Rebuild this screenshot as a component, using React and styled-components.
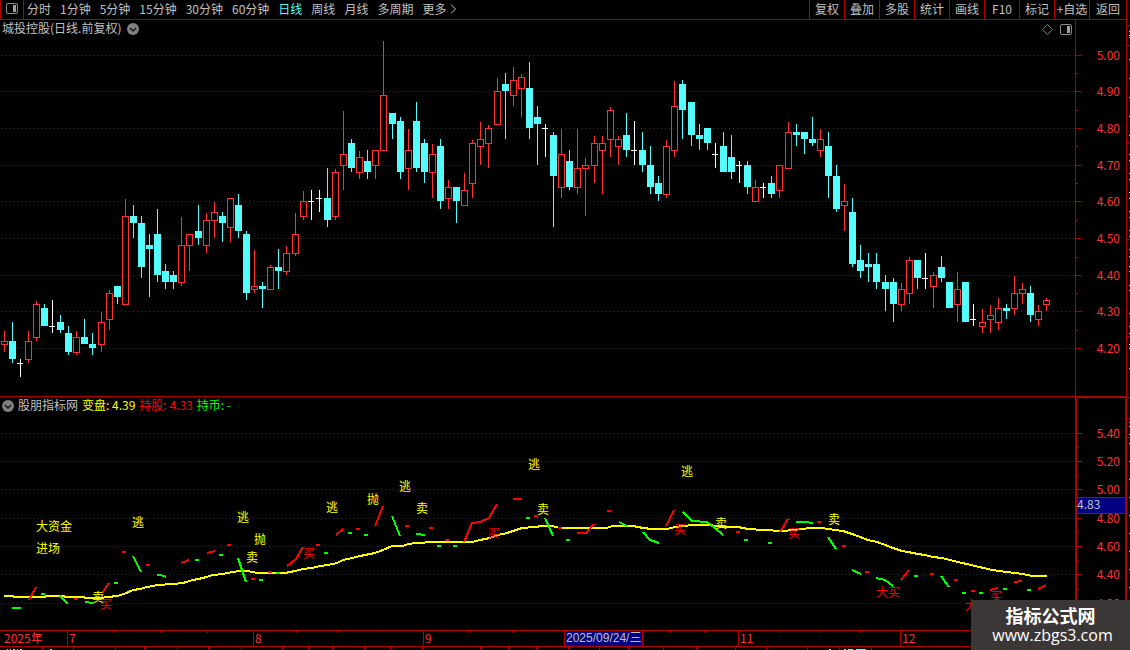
import React from 'react';
import styled, { createGlobalStyle, css } from 'styled-components';

const RED = '#b00000';
const UP = '#ff3232';
const DOWN = '#54fcfc';
const TEXT = '#c0c0c0';
const FONT = "'Noto Sans CJK SC', 'Noto Sans', sans-serif";

const GlobalStyle = createGlobalStyle`
  * {
    box-sizing: border-box;
  }
  body {
    margin: 0;
    background: #000;
    color: ${TEXT};
    font-family: ${FONT};
    font-size: 12px;
    overflow: hidden;
  }
`;

const Page = styled.div`
  display: flex;
  min-height: 100vh;
  background: #000;
`;

const Main = styled.main`
  flex: 1;
  min-width: 0;
  display: flex;
  flex-direction: column;
`;

const SideStrip = styled.aside`
  width: 4px;
  border-left: 1px solid ${RED};
`;

const Toolbar = styled.header`
  display: flex;
  height: 20px;
  border-bottom: 1px solid ${RED};
`;

const buttonReset = css`
  padding: 0;
  border: 0;
  background: none;
  color: inherit;
  font-family: inherit;
  font-size: 12px;
  line-height: 17px;
  white-space: nowrap;
  cursor: pointer;
`;

const LayoutButton = styled.button`
  ${buttonReset}
  display: flex;
  align-items: center;
  justify-content: center;
  width: 24px;
  padding-bottom: 2px;
  border-left: 1px solid ${RED};
  border-right: 1px solid ${RED};
`;

const Periods = styled.nav`
  display: flex;
  gap: 9px;
  padding-left: 3px;
`;

const PeriodButton = styled.button`
  ${buttonReset}
  display: flex;
  align-items: center;
  padding-bottom: 2px;
  color: ${(props) => (props.$active ? DOWN : TEXT)};
`;

const Tools = styled.nav`
  display: flex;
  margin-left: auto;
`;

const ToolButton = styled.button`
  ${buttonReset}
  width: 35px;
  padding-bottom: 2px;
  border-left: 1px solid ${RED};

  &:last-child {
    width: 37px;
  }
`;

const Panel = styled.section`
  display: flex;
`;

const Plot = styled.div`
  flex: 1;
  min-width: 0;
  border-top: ${(props) => (props.$ruled ? `1px solid ${RED}` : '0')};
`;

const Axis = styled.div`
  width: 51px;
  border-left: 1px solid ${RED};
  ${(props) =>
    props.$selected &&
    css`
      border: 0 solid ${RED};
      border-width: 2px 1px 0 2px;
    `}
`;

const Caption = styled.div`
  display: flex;
  align-items: center;
  height: 18px;
  padding-left: 2px;
  gap: ${(props) => props.$gap}px;
  line-height: 16px;
  white-space: nowrap;
`;

const Title = styled.span`
  padding-bottom: 2px;
  color: ${(props) => props.$color || TEXT};
`;

const CaptionTools = styled.div`
  display: flex;
  align-items: center;
  gap: 7px;
  margin-left: auto;
  padding-right: 3px;
`;

const IconButton = styled.button`
  ${buttonReset}
  display: flex;
`;

const Drawing = styled.svg`
  display: block;
  width: 100%;
  height: ${(props) => props.$height}px;
  overflow: visible;
  font-family: ${FONT};
  font-size: 12px;
`;

const TimeBar = styled.div`
  border-top: 1px solid ${RED};
  border-bottom: 1px solid ${RED};
`;

const Watermark = styled.div`
  position: absolute;
  right: 0;
  bottom: 0;
  width: 159px;
  height: 50px;
  padding-top: 5px;
  background: #3c3737;
  color: #fff;
  text-align: center;
`;

const SiteName = styled.div`
  font-size: 18px;
  font-weight: 700;
  line-height: 20px;
`;

const SiteUrl = styled.div`
  padding-left: 4px;
  font-family: 'Open Sans', sans-serif;
  font-size: 16px;
  line-height: 20px;
`;

const periods = ['分时', '1分钟', '5分钟', '15分钟', '30分钟', '60分钟', '日线', '周线', '月线', '多周期'];
const tools = ['复权', '叠加', '多股', '统计', '画线', 'F10', '标记', '+自选', '返回'];

// kind (u = up, d = down, f = flat), then high, body top, body bottom, low
const candles = [
  ['u', 331, 341, 345, 352], ['d', 322, 341, 359, 363], ['f', 359, 363, 364, 377],
  ['u', 331, 341, 360, 363], ['u', 301, 304, 338, 341], ['d', 304, 308, 326, 326],
  ['f', 300, 326, 327, 333], ['d', 315, 322, 330, 333], ['d', 326, 333, 352, 355],
  ['u', 331, 337, 353, 355], ['d', 319, 337, 344, 344], ['d', 333, 344, 348, 355],
  ['u', 312, 322, 345, 352], ['u', 290, 293, 320, 330], ['d', 286, 286, 297, 304],
  ['u', 199, 216, 305, 305], ['d', 205, 216, 223, 238], ['d', 216, 223, 267, 278],
  ['d', 234, 245, 249, 297], ['d', 209, 234, 275, 282], ['d', 264, 271, 282, 289],
  ['d', 271, 275, 282, 289], ['u', 217, 245, 283, 286], ['u', 234, 234, 246, 271],
  ['d', 205, 231, 238, 245], ['u', 213, 220, 246, 253], ['u', 202, 212, 221, 238],
  ['d', 212, 216, 223, 242], ['u', 198, 198, 228, 242], ['d', 194, 205, 231, 238],
  ['d', 231, 234, 293, 300], ['u', 250, 286, 290, 293], ['d', 282, 286, 289, 308],
  ['u', 265, 267, 290, 290], ['d', 249, 267, 271, 289], ['u', 246, 253, 272, 275],
  ['u', 213, 234, 254, 256], ['u', 191, 201, 217, 220], ['f', 190, 201, 202, 220],
  ['f', 190, 198, 199, 212], ['d', 168, 198, 220, 227], ['u', 169, 172, 217, 220],
  ['u', 111, 154, 166, 190], ['d', 139, 143, 168, 172], ['u', 151, 157, 173, 179],
  ['d', 150, 161, 172, 179], ['u', 150, 150, 166, 179], ['u', 41, 95, 151, 151],
  ['d', 113, 113, 124, 139], ['d', 117, 121, 172, 179], ['u', 129, 150, 169, 190],
  ['d', 102, 121, 168, 172], ['d', 139, 143, 172, 183], ['u', 144, 154, 173, 198],
  ['d', 139, 146, 201, 209], ['u', 180, 187, 199, 209], ['d', 187, 187, 201, 223],
  ['u', 173, 190, 206, 206], ['u', 140, 143, 184, 198], ['u', 122, 139, 147, 165],
  ['u', 125, 128, 144, 168], ['u', 78, 91, 125, 125], ['d', 73, 84, 91, 139],
  ['u', 67, 80, 96, 106], ['u', 74, 77, 89, 117], ['d', 62, 88, 128, 139],
  ['d', 106, 117, 124, 165], ['f', 124, 128, 129, 157], ['d', 132, 135, 176, 227],
  ['u', 129, 154, 188, 198], ['d', 150, 161, 187, 190], ['u', 129, 168, 188, 194],
  ['u', 158, 165, 169, 216], ['u', 136, 143, 166, 183], ['u', 136, 143, 151, 194],
  ['u', 107, 110, 140, 157], ['u', 136, 139, 147, 165], ['d', 113, 135, 150, 157],
  ['f', 121, 150, 151, 165], ['d', 132, 150, 165, 172], ['d', 146, 165, 187, 194],
  ['d', 176, 183, 194, 201], ['u', 140, 146, 195, 198], ['u', 81, 106, 151, 157],
  ['d', 80, 84, 110, 139], ['d', 102, 102, 135, 146], ['d', 124, 135, 139, 150],
  ['d', 128, 128, 143, 150], ['f', 143, 154, 155, 168], ['d', 132, 146, 172, 172],
  ['d', 135, 157, 172, 179], ['f', 161, 165, 166, 183], ['d', 161, 165, 187, 194],
  ['u', 180, 187, 202, 202], ['f', 183, 187, 188, 198], ['d', 176, 183, 194, 198],
  ['u', 165, 165, 191, 198], ['u', 122, 132, 169, 169], ['d', 124, 132, 135, 146],
  ['d', 132, 132, 139, 154], ['d', 117, 139, 143, 146], ['u', 129, 139, 151, 157],
  ['d', 132, 146, 176, 198], ['d', 165, 176, 209, 212], ['u', 184, 201, 206, 231],
  ['d', 198, 212, 264, 267], ['d', 245, 260, 271, 278], ['d', 253, 264, 267, 282],
  ['d', 253, 264, 282, 289], ['d', 275, 282, 289, 311], ['d', 278, 282, 304, 322],
  ['u', 283, 289, 305, 311], ['u', 257, 260, 294, 304], ['d', 260, 260, 278, 289],
  ['f', 253, 278, 279, 289], ['u', 272, 275, 287, 308], ['d', 256, 267, 278, 282],
  ['d', 282, 282, 308, 308], ['u', 272, 289, 305, 322], ['d', 282, 282, 322, 322],
  ['f', 304, 319, 320, 326], ['u', 309, 322, 327, 333], ['u', 305, 315, 320, 333],
  ['u', 298, 308, 323, 330], ['d', 304, 308, 311, 319], ['u', 276, 293, 309, 315],
  ['u', 283, 289, 294, 304], ['d', 286, 293, 315, 322], ['u', 305, 311, 320, 326],
  ['u', 298, 300, 305, 311],
];

const priceScale = [
  [55, '5.00'], [91, '4.90'], [128, '4.80'], [165, '4.70'], [201, '4.60'],
  [238, '4.50'], [275, '4.40'], [311, '4.30'], [348, '4.20'],
];
const priceMinor = [73, 110, 146, 183, 220, 257, 293, 330];

const indicatorScale = [
  [433, '5.40'], [461, '5.20'], [489, '5.00'], [518, '4.80'], [546, '4.60'],
  [574, '4.40'], [603, '4.20'],
];
const indicatorMinor = [447, 475, 532, 560, 589];

const trend =
  '4,596 12,596 15,597 44,597 47,596 62,596 67,597 82,597 87,598 100,598 108,597 117,596 124,594 133,590 140,589 147,587 158,585 173,584 183,583 193,580 203,578 213,575 223,574 232,572 240,571 248,571 257,573 285,573 295,571 303,569 312,568 320,566 328,565 337,563 343,560 352,558 360,556 375,553 383,550 392,546 403,546 408,544 417,543 433,542 472,542 480,540 490,538 498,535 507,533 513,531 522,528 535,527 542,526 552,526 560,528 607,528 612,526 633,526 643,528 652,529 667,529 675,527 692,525 708,525 717,526 723,527 738,527 748,529 763,530 783,531 793,530 810,528 822,528 828,529 843,531 852,534 860,537 868,540 877,542 885,545 893,548 902,551 908,552 918,554 925,555 933,557 942,558 958,562 975,566 992,570 1007,572 1015,573 1023,574 1032,576 1047,576';

const redRuns = [
  '29,600 36,587', '74,599 78,599', '102,593 109,583', '122,552 126,552', '146,565 150,565',
  '181,563 189,560', '207,553 215,551', '227,545 231,545', '251,579 255,579', '268,572 272,572',
  '287,566 296,559 303,547', '316,545 320,545', '336,535 343,529', '356,529 360,529',
  '375,526 383,506', '405,526 409,526', '429,528 433,528', '445,540 449,540',
  '464,542 472,523 480,522 489,518 497,504', '513,499 522,499', '534,516 538,516',
  '558,528 562,528', '577,533 586,533 594,524', '607,511 611,511', '666,526 674,510',
  '736,532 740,532', '780,532 788,519', '817,522 821,522', '842,546 846,546', '865,572 869,572',
  '901,580 909,570', '930,574 934,574', '954,580 958,580', '971,591 975,591', '990,590 998,588',
  '1014,582 1022,581', '1038,589 1046,585',
];

const greenRuns = [
  '12,608 21,608', '41,594 45,594', '60,596 68,604', '85,602 93,603', '114,583 118,583',
  '133,556 141,572', '157,575 161,575 166,577', '195,560 199,560', '219,555 223,555',
  '238,558 246,582', '259,580 263,580', '276,573 280,573', '324,553 328,553', '348,533 352,533',
  '364,535 368,535', '392,516 400,536', '416,534 425,535', '437,546 441,546', '453,546 457,546',
  '526,518 530,518', '545,518 553,536', '566,540 570,540', '619,522 627,526',
  '643,532 650,540 659,543', '683,512 692,521 707,522 715,528 723,535', '744,540 748,540',
  '768,543 772,543', '796,522 805,522 813,523', '828,537 836,549', '852,570 861,574',
  '876,578 885,580 893,586', '914,576 918,576', '941,576 949,587', '962,593 966,593',
  '979,593 983,593', '1003,589 1007,589', '1027,590 1031,590',
];

const sellMarks = [
  [36, 526, '大资金'], [36, 548, '进场'], [92, 597, '卖'], [132, 522, '逃'], [237, 517, '逃'],
  [254, 539, '抛'], [246, 557, '卖'], [326, 507, '逃'], [367, 499, '抛'], [399, 486, '逃'],
  [416, 508, '卖'], [528, 464, '逃'], [537, 509, '卖'], [681, 471, '逃'], [715, 523, '卖'],
  [828, 519, '卖'],
];

const buyMarks = [
  [100, 604, '买'], [303, 553, '买'], [488, 533, '买'], [674, 529, '买'], [788, 533, '买'],
  [876, 592, '大买'], [965, 605, '大买'], [990, 596, '买'],
];

const months = [
  [67, '7'], [253, '8'], [423, '9'], [738, '11'], [900, '12'],
];
const weekTicks = [114, 160, 207, 296, 338, 381, 468, 512, 557, 670, 704, 779, 819, 860];

const footerTicks = [
  42, 73, 115, 144, 177, 208, 241, 282, 308, 332, 364, 390, 422, 480, 508, 536, 568, 599, 628,
  663, 696, 735, 766, 807, 839, 871,
];

const sideRules = [25, 45, 142, 239, 336, 397, 418, 437];
const sideDots = [
  31, 35, 37, 59, 78, 97, 116, 135, 154, 160, 173, 179, 192, 198, 211, 217, 230, 236, 249, 256,
  266, 271, 285, 290, 313, 326, 333, 344, 348, 368, 422, 426, 434, 443, 461, 479, 497, 515, 533,
  551, 569, 587,
];

const candleX = (index) => Math.floor(4.06 + index * 8.0822);

const PanelIcon = () => (
  <svg width="12" height="11" viewBox="0 0 12 11" fill="none" aria-hidden="true">
    <rect x="0.5" y="0.5" width="11" height="10" rx="1.5" stroke="#8a8a8a" />
    <rect x="7" y="2" width="3" height="7" fill="#a0a0a0" />
  </svg>
);

const DiamondIcon = () => (
  <svg width="11" height="11" viewBox="0 0 11 11" fill="none" aria-hidden="true">
    <path d="M5.5 0.5L10.5 5.5L5.5 10.5L0.5 5.5Z" stroke="#808080" />
  </svg>
);

const RoundArrow = () => (
  <svg width="12" height="12" viewBox="0 0 12 12" fill="none" aria-hidden="true">
    <circle cx="6" cy="6" r="6" fill="#808080" />
    <path d="M3 5L6 8L9 5" stroke="#111" strokeWidth="1.4" />
  </svg>
);

const MoreArrow = () => (
  <svg width="11" height="10" viewBox="0 0 11 10" fill="none" aria-hidden="true">
    <path d="M5 0.5L9.5 5L5 9.5" stroke={TEXT} />
  </svg>
);

const GridLines = ({ scale }) =>
  scale.map(([y]) => (
    <line key={y} x1="1" x2="100%" y1={y + 0.5} y2={y + 0.5} stroke="#980808" strokeDasharray="1 3" />
  ));

const Candle = ({ x, kind, high, top, bottom, low }) => {
  const color = { u: UP, d: DOWN, f: '#fff' }[kind];
  if (kind === 'u') {
    return (
      <g fill={color}>
        <rect x={x} y={high} width="1" height={top - high} />
        <rect x={x} y={bottom} width="1" height={low - bottom} />
        <rect x={x - 2.5} y={top + 0.5} width="6" height={bottom - top - 1} fill="none" stroke={color} />
      </g>
    );
  }
  return (
    <g fill={color}>
      <rect x={x} y={high} width="1" height={low - high} />
      <rect x={x - 3} y={top} width={kind === 'f' ? 6 : 7} height={bottom - top} />
    </g>
  );
};

const ScaleMarks = ({ scale, minor, labelEnd }) => (
  <>
    {scale.map(([y, label]) => (
      <g key={label}>
        <rect y={y} width="5" height="1" fill={RED} />
        <text x={labelEnd} y={y + 5} textAnchor="end" fill={UP}>
          {label}
        </text>
      </g>
    ))}
    {minor.map((y) => (
      <rect key={y} y={y} width="2" height="1" fill={RED} />
    ))}
  </>
);

const PricePanel = () => (
  <Panel>
    <Plot>
      <Caption $gap={6}>
        <Title>城投控股(日线.前复权)</Title>
        <IconButton aria-label="展开">
          <RoundArrow />
        </IconButton>
        <CaptionTools>
          <IconButton aria-label="标记点">
            <DiamondIcon />
          </IconButton>
          <IconButton aria-label="侧栏">
            <PanelIcon />
          </IconButton>
        </CaptionTools>
      </Caption>
      <Drawing $height={358} shapeRendering="crispEdges">
        <g transform="translate(0 -38)">
          <GridLines scale={priceScale} />
          {candles.map(([kind, high, top, bottom, low], i) => (
            <Candle key={i} x={candleX(i)} kind={kind} high={high} top={top} bottom={bottom} low={low} />
          ))}
        </g>
      </Drawing>
    </Plot>
    <Axis>
      <Drawing $height={376}>
        <g transform="translate(0 -20)">
          <ScaleMarks scale={priceScale} minor={priceMinor} labelEnd={44} />
        </g>
      </Drawing>
    </Axis>
  </Panel>
);

const IndicatorPanel = () => (
  <Panel>
    <Plot $ruled>
      <Caption $gap={4}>
        <IconButton aria-label="展开">
          <RoundArrow />
        </IconButton>
        <Title>股朋指标网</Title>
        <Title $color="#ffff00">变盘: 4.39</Title>
        <Title $color="#ff0000">持股: 4.33</Title>
        <Title $color="#00ff00">持币: -</Title>
      </Caption>
      <Drawing $height={215}>
        <g transform="translate(0 -415)">
          <g shapeRendering="crispEdges">
            <GridLines scale={indicatorScale} />
          </g>
          <g fill="none" strokeWidth="2" shapeRendering="crispEdges">
            <polyline points={trend} stroke="#ffff00" />
            {redRuns.map((points) => (
              <polyline key={points} points={points} stroke="#ff0000" />
            ))}
            {greenRuns.map((points) => (
              <polyline key={points} points={points} stroke="#00ff00" />
            ))}
          </g>
          {sellMarks.map(([x, y, label]) => (
            <text key={`${x}-${y}`} x={x} y={y + 5} fill="#ffff00">
              {label}
            </text>
          ))}
          {buyMarks.map(([x, y, label]) => (
            <text key={`${x}-${y}`} x={x} y={y + 5} fill="#ff0000">
              {label}
            </text>
          ))}
        </g>
      </Drawing>
    </Plot>
    <Axis $selected>
      <Drawing $height={232}>
        <g transform="translate(0 -398)">
          <ScaleMarks scale={indicatorScale} minor={indicatorMinor} labelEnd={43} />
          <rect y="497" width="100%" height="17" fill={RED} />
          <rect y="498" width="100%" height="15" fill="#000080" />
          <text x="0" y="509" fill={TEXT}>
            4.83
          </text>
        </g>
      </Drawing>
    </Axis>
  </Panel>
);

const TimeAxis = () => (
  <TimeBar>
    <Drawing $height={15}>
      <text x="4" y="12" fill={UP}>
        2025年
      </text>
      {months.map(([x, label]) => (
        <g key={label}>
          <rect x={x} width="1" height="15" fill={RED} />
          <text x={x + 2} y="12" fill={UP}>
            {label}
          </text>
        </g>
      ))}
      {weekTicks.map((x) => (
        <rect key={x} x={x} width="1" height="2" fill={RED} />
      ))}
      <rect x="564" width="79" height="15" fill={RED} />
      <rect x="565" width="77" height="15" fill="#000080" />
      <text x="566" y="11" fill={TEXT} fontFamily="'Liberation Sans', 'Noto Sans CJK SC', sans-serif">
        2025/09/24/三
      </text>
    </Drawing>
  </TimeBar>
);

const App = () => {
  return (
    <Page>
      <GlobalStyle />
      <Main>
        <Toolbar>
          <LayoutButton aria-label="布局">
            <PanelIcon />
          </LayoutButton>
          <Periods>
            {periods.map((name) => (
              <PeriodButton key={name} $active={name === '日线'}>
                {name}
              </PeriodButton>
            ))}
            <PeriodButton>
              更多
              <MoreArrow />
            </PeriodButton>
          </Periods>
          <Tools>
            {tools.map((name) => (
              <ToolButton key={name}>{name}</ToolButton>
            ))}
          </Tools>
        </Toolbar>
        <PricePanel />
        <IndicatorPanel />
        <TimeAxis />
        <Drawing $height={3} shapeRendering="crispEdges">
          {footerTicks.map((x) => (
            <rect key={x} x={x} width="1" height="3" fill={RED} />
          ))}
          <path d="M7 2.5h1M10 2.5h1M13 2.5h2M17 2.5h1M20 2.5h2M50 2.5h2M829 2.5h2" stroke={TEXT} />
          <path d="M844 2.5h2M848 2.5h5M856 2.5h10" stroke={DOWN} />
        </Drawing>
      </Main>
      <SideStrip>
        <Drawing $height={600} shapeRendering="crispEdges">
          {sideRules.map((y) => (
            <rect key={y} y={y} width="3" height="1" fill={RED} />
          ))}
          {sideDots.map((y) => (
            <rect key={y} x="2" y={y} width="1" height="1" fill={TEXT} />
          ))}
        </Drawing>
      </SideStrip>
      <Watermark>
        <SiteName>指标公式网</SiteName>
        <SiteUrl>www.zbgs3.com</SiteUrl>
      </Watermark>
    </Page>
  );
};

export default App;
